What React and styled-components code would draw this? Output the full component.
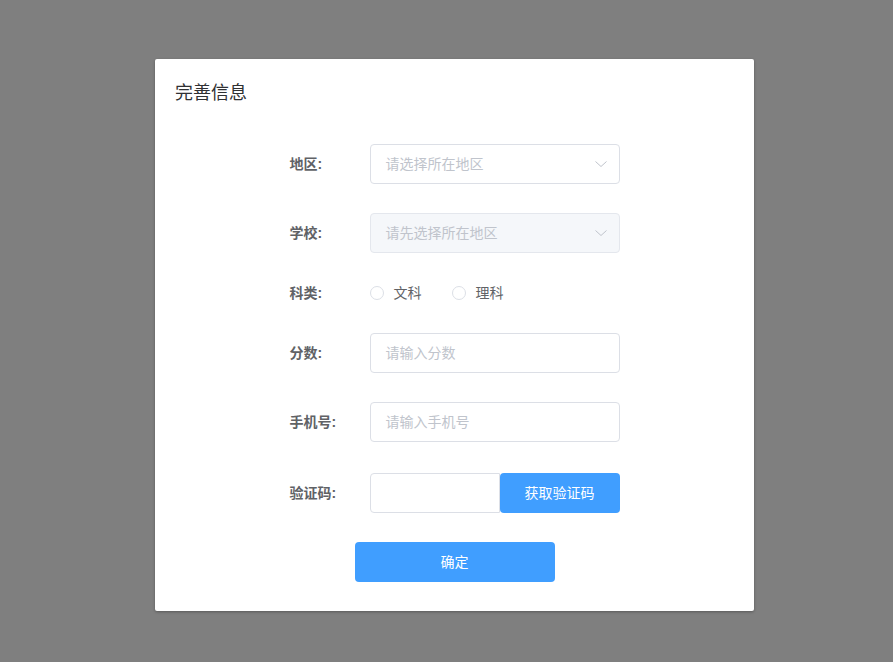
import React, { useState } from 'react';
import styled, { createGlobalStyle } from 'styled-components';

const GlobalStyle = createGlobalStyle`
  html, body {
    margin: 0;
    padding: 0;
    background: #7f7f7f;
    font-family: "Helvetica Neue", "Liberation Sans", "Noto Sans CJK SC", sans-serif;
  }
`;

const Overlay = styled.div`
  width: 893px;
  height: 662px;
  background: #7f7f7f;
  display: flex;
  justify-content: center;
  align-items: flex-start;
  padding-top: 59px;
  box-sizing: border-box;
`;

const Dialog = styled.div`
  width: 599px;
  height: 552px;
  background: #fff;
  border-radius: 2px;
  box-shadow: 0 1px 3px rgba(0, 0, 0, 0.3);
  box-sizing: border-box;
  margin-left: 16px;
`;

const Header = styled.div`
  padding: 22px 20px 8px;
`;

const Title = styled.span`
  font-size: 18px;
  line-height: 24px;
  color: #303133;
  display: block;
`;

const Body = styled.div`
  padding: 31px 20px 30px;
  display: flex;
  flex-direction: column;
  align-items: center;
`;

const Form = styled.div`
  width: 330px;
  display: flex;
  flex-direction: column;
`;

const FormItem = styled.div`
  display: flex;
  align-items: center;
  height: ${p => p.$h || 40}px;
  margin-bottom: ${p => p.$mb ?? 29}px;
`;

const Label = styled.label`
  width: 80px;
  flex-shrink: 0;
  font-size: 14px;
  font-weight: bold;
  color: #606266;
  padding-bottom: 3px;
`;

const InputBox = styled.div`
  width: ${p => p.$w || 250}px;
  height: 40px;
  box-sizing: border-box;
  border: 1px solid ${p => (p.$disabled ? '#e4e7ed' : '#dcdfe6')};
  background: ${p => (p.$disabled ? '#f5f7fa' : '#fff')};
  border-radius: ${p => p.$radius || '4px'};
  display: flex;
  align-items: center;
  justify-content: space-between;
  padding: 0 ${p => (p.$select ? 11 : 15)}px 3px 15px;
  font-size: 14px;
  color: #c0c4cc;
`;

const Chevron = () => (
  <svg width="14" height="14" viewBox="0 0 14 14" style={{ marginTop: 3 }}>
    <path d="M1.5 4.5 L7 9.5 L12.5 4.5" fill="none" stroke="#c0c4cc" strokeWidth="1" />
  </svg>
);

const RadioGroup = styled.div`
  display: flex;
  align-items: center;
`;

const Radio = styled.div`
  display: flex;
  align-items: center;
  margin-right: 30px;
  cursor: pointer;
`;

const RadioCircle = styled.span`
  width: 14px;
  height: 14px;
  box-sizing: border-box;
  border: 1px solid #dcdfe6;
  border-radius: 50%;
  background: #fff;
  display: inline-block;
`;

const RadioText = styled.span`
  padding-left: 10px;
  font-size: 14px;
  color: #606266;
  padding-bottom: 2px;
`;

const CodeButton = styled.button`
  width: 120px;
  height: 40px;
  border: none;
  border-radius: 4px;
  background: #409eff;
  color: #fff;
  font-size: 14px;
  font-family: inherit;
  padding: 0 0 3px;
  cursor: pointer;
`;

const SubmitButton = styled.button`
  width: 200px;
  height: 40px;
  border: none;
  border-radius: 4px;
  background: #409eff;
  color: #fff;
  font-size: 14px;
  font-family: inherit;
  padding: 0 0 3px;
  cursor: pointer;
`;

export default function App() {
  const [subject, setSubject] = useState(null);

  return (
    <>
      <GlobalStyle />
      <Overlay>
        <Dialog>
          <Header>
            <Title>完善信息</Title>
          </Header>
          <Body>
            <Form>
              <FormItem>
                <Label>地区:</Label>
                <InputBox $select>
                  <span>请选择所在地区</span>
                  <Chevron />
                </InputBox>
              </FormItem>
              <FormItem>
                <Label>学校:</Label>
                <InputBox $select $disabled>
                  <span>请先选择所在地区</span>
                  <Chevron />
                </InputBox>
              </FormItem>
              <FormItem $h={22}>
                <Label>科类:</Label>
                <RadioGroup>
                  {['文科', '理科'].map(s => (
                    <Radio key={s} onClick={() => setSubject(s)}>
                      <RadioCircle />
                      <RadioText>{s}</RadioText>
                    </Radio>
                  ))}
                </RadioGroup>
              </FormItem>
              <FormItem>
                <Label>分数:</Label>
                <InputBox>请输入分数</InputBox>
              </FormItem>
              <FormItem $mb={31}>
                <Label>手机号:</Label>
                <InputBox>请输入手机号</InputBox>
              </FormItem>
              <FormItem>
                <Label>验证码:</Label>
                <InputBox $w={130} $radius="4px 0 0 4px" />
                <CodeButton>获取验证码</CodeButton>
              </FormItem>
            </Form>
            <SubmitButton>确定</SubmitButton>
          </Body>
        </Dialog>
      </Overlay>
    </>
  );
}
